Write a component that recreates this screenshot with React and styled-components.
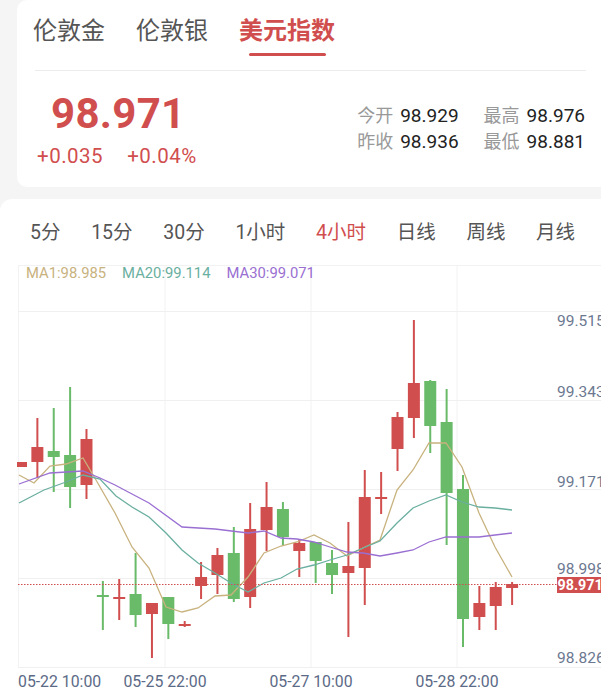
import React from 'react';
import styled, { createGlobalStyle } from 'styled-components';

const GlobalStyle = createGlobalStyle`
  html, body {
    margin: 0;
    padding: 0;
    background: #f5f5f5;
    font-family: Roboto, "Noto Sans CJK SC", sans-serif;
  }
  * { box-sizing: border-box; }
`;

const RED = '#d14e4e';
const GREEN = '#69ba69';

const Page = styled.div`
  width: 601px;
  height: 689px;
  overflow: hidden;
  display: flex;
  flex-direction: column;
  gap: 12px;
`;

const QuoteCard = styled.div`
  margin-left: 17px;
  height: 188px;
  background: #fff;
  border-radius: 10px 0 0 10px;
  display: flex;
  flex-direction: column;
`;

const Tabs = styled.div`
  height: 70px;
  display: flex;
  align-items: flex-start;
  gap: 31px;
  padding: 14px 0 0 16px;
`;

const Tab = styled.div`
  position: relative;
  font-size: 24px;
  line-height: 34px;
  color: ${({ active }) => (active ? RED : '#555')};
  font-weight: ${({ active }) => (active ? 700 : 400)};
  padding-bottom: 8px;

  &::after {
    content: '';
    display: ${({ active }) => (active ? 'block' : 'none')};
    position: absolute;
    left: 10px;
    right: 9px;
    bottom: 0;
    height: 3px;
    border-radius: 2px;
    background: ${RED};
  }
`;

const Divider = styled.div`
  height: 1px;
  background: #ececec;
  margin: 0 15px 0 18px;
`;

const QuoteRow = styled.div`
  display: flex;
  justify-content: space-between;
  padding: 18px 16px 0 20px;
`;

const PriceBlock = styled.div`
  display: flex;
  flex-direction: column;
`;

const Price = styled.div`
  font-size: 42px;
  font-weight: 700;
  color: ${RED};
  line-height: 50px;
  padding-left: 14px;
  letter-spacing: 0.3px;
`;

const Changes = styled.div`
  display: flex;
  gap: 24px;
  margin-top: 5px;
  font-size: 20.5px;
  line-height: 24px;
  letter-spacing: 0.5px;
  color: ${RED};
`;

const Stats = styled.div`
  display: grid;
  grid-template-columns: auto auto;
  column-gap: 25px;
  row-gap: 4px;
  margin-top: 16px;
  align-content: start;
`;

const Stat = styled.div`
  font-size: 19px;
  line-height: 22px;
  color: #222;
  white-space: nowrap;

  span {
    font-size: 18px;
    color: #999;
    margin-right: 7px;
  }
`;

const ChartCard = styled.div`
  flex: 1;
  background: #fff;
  border-radius: 12px 0 0 0;
  display: flex;
  flex-direction: column;
`;

const Periods = styled.div`
  height: 66px;
  display: flex;
  align-items: center;
  padding: 0 0 4px 30px;
  gap: 30.7px;
`;

const Period = styled.div`
  font-size: 19.5px;
  color: ${({ active }) => (active ? RED : '#555')};
`;

const ChartArea = styled.div`
  position: relative;
  flex: 1;
  border-top: 1px solid #f2f2f2;
  margin-left: 18px;
`;

const Legend = styled.div`
  position: absolute;
  top: -1px;
  left: 8px;
  display: flex;
  gap: 16px;
  font-size: 14.8px;
  line-height: 17px;
`;

const LegendItem = styled.span`
  color: ${({ color }) => color};
`;

const ChartSvg = styled.svg`
  display: block;
  margin-left: -18px;
`;

// [open, close, high, low] in pixel y
const candles = [
  [467, 462, 462, 467],
  [462, 447, 418, 478],
  [451, 457, 408, 492],
  [455, 487, 387, 508],
  [485, 439, 429, 499],
  [595, 596, 581, 630],
  [598, 597, 579, 620],
  [594, 615, 553, 627],
  [614, 603, 603, 658],
  [597, 624, 597, 639],
  [625, 624, 621, 627],
  [586, 577, 562, 599],
  [575, 555, 548, 594],
  [553, 599, 527, 602],
  [597, 529, 503, 608],
  [530, 507, 482, 551],
  [509, 537, 502, 545],
  [551, 543, 539, 577],
  [542, 561, 542, 583],
  [563, 575, 550, 594],
  [573, 566, 522, 637],
  [568, 497, 470, 605],
  [498, 497, 472, 514],
  [449, 417, 412, 471],
  [418, 383, 320, 438],
  [381, 426, 380, 453],
  [422, 493, 389, 545],
  [489, 619, 475, 647],
  [617, 603, 586, 630],
  [606, 587, 582, 630],
  [588, 584, 582, 605],
];

const ma1 = [
  [19, 475], [34, 483], [50, 466], [66, 464], [83, 458], [96, 480], [115, 513],
  [132, 547], [149, 568], [166, 607], [182, 612], [198, 608], [215, 596],
  [231, 595], [248, 577], [264, 553], [281, 546], [297, 542], [314, 535],
  [330, 543], [347, 556], [363, 548], [380, 540], [397, 490], [413, 470],
  [429, 443], [446, 443], [462, 467], [479, 513], [495, 547], [512, 577],
];

const ma20 = [
  [19, 503], [44, 490], [66, 482], [83, 475], [100, 479], [116, 496],
  [132, 507], [149, 517], [166, 533], [182, 550], [198, 563], [215, 573],
  [231, 583], [248, 592], [264, 583], [281, 578], [297, 569], [314, 565],
  [330, 560], [347, 555], [363, 548], [380, 541], [397, 523], [413, 508],
  [429, 501], [446, 495], [462, 502], [479, 507], [495, 508], [512, 510],
];

const ma30 = [
  [19, 484], [50, 473], [83, 471], [100, 478], [115, 485], [149, 503],
  [182, 527], [215, 529], [248, 533], [264, 531], [281, 538], [297, 539],
  [314, 542], [330, 547], [347, 552], [363, 553], [380, 556], [397, 553],
  [413, 550], [429, 542], [446, 537], [462, 537], [479, 537], [495, 535],
  [512, 533],
];

const axis = [
  ['99.515', 320],
  ['99.343', 391],
  ['99.171', 481],
  ['98.998', 568],
  ['98.826', 657],
];

const dates = [
  ['05-22 10:00', 18, 'start'],
  ['05-25 22:00', 165, 'middle'],
  ['05-27 10:00', 311, 'middle'],
  ['05-28 22:00', 457, 'middle'],
];

const pts = (list) => list.map(([x, y]) => `${x},${y}`).join(' ');

const Chart = () => (
  <ChartSvg width="601" height="423" viewBox="0 266 601 423">
    {[165, 311, 457].map((x) => (
      <line key={x} x1={x} y1={266} x2={x} y2={667} stroke="#f2f2f2" />
    ))}
    <line x1={18.5} y1={266} x2={18.5} y2={667} stroke="#f2f2f2" />
    {[311, 400, 489, 578, 667].map((y) => (
      <line key={y} x1={18} y1={y + 0.5} x2={601} y2={y + 0.5} stroke="#f0f0f0" />
    ))}

    {candles.map(([o, c, h, l], i) => {
      const x = 21 + i * 16.37;
      const up = c < o;
      const color = up ? RED : GREEN;
      const top = Math.min(o, c);
      const bh = Math.max(Math.abs(o - c), 2);
      return (
        <g key={i}>
          <line x1={x} y1={h} x2={x} y2={l} stroke={color} strokeWidth="2" />
          <rect
            x={i === 0 ? 17 : x - 6}
            y={top}
            width={i === 0 ? 10 : 12}
            height={bh}
            fill={color}
          />
        </g>
      );
    })}

    <polyline points={pts(ma1)} fill="none" stroke="#c8b27e" strokeWidth="1.3" />
    <polyline points={pts(ma20)} fill="none" stroke="#6aafa0" strokeWidth="1.3" />
    <polyline points={pts(ma30)} fill="none" stroke="#9a6fd2" strokeWidth="1.3" />

    <line
      x1={18}
      y1={584.5}
      x2={557}
      y2={584.5}
      stroke={RED}
      strokeWidth="1"
      strokeDasharray="1.5 1.5"
    />

    {axis.map(([t, y]) => (
      <text
        key={t}
        x={557}
        y={y + 5.5}
        fontSize="15.5"
        fill="#6b7890"
        fontFamily="Roboto, sans-serif"
      >
        {t}
      </text>
    ))}

    <rect x={557} y={577} width={46} height={16} fill={RED} />
    <text x={557.5} y={590} fontSize="14.3" fontWeight="700" fill="#fff" fontFamily="Roboto, sans-serif">
      98.971
    </text>

    {dates.map(([t, x, anchor]) => (
      <text
        key={t}
        x={x}
        y={687}
        fontSize="15.8"
        fill="#5b6a86"
        textAnchor={anchor}
        fontFamily="Roboto, sans-serif"
      >
        {t}
      </text>
    ))}
  </ChartSvg>
);

const periods = ['5分', '15分', '30分', '1小时', '4小时', '日线', '周线', '月线'];

const App = () => (
  <>
    <GlobalStyle />
    <Page>
      <QuoteCard>
        <Tabs>
          <Tab>伦敦金</Tab>
          <Tab>伦敦银</Tab>
          <Tab active>美元指数</Tab>
        </Tabs>
        <Divider />
        <QuoteRow>
          <PriceBlock>
            <Price>98.971</Price>
            <Changes>
              <span>+0.035</span>
              <span>+0.04%</span>
            </Changes>
          </PriceBlock>
          <Stats>
            <Stat><span>今开</span>98.929</Stat>
            <Stat><span>最高</span>98.976</Stat>
            <Stat><span>昨收</span>98.936</Stat>
            <Stat><span>最低</span>98.881</Stat>
          </Stats>
        </QuoteRow>
      </QuoteCard>
      <ChartCard>
        <Periods>
          {periods.map((p) => (
            <Period key={p} active={p === '4小时'}>{p}</Period>
          ))}
        </Periods>
        <ChartArea>
          <Legend>
            <LegendItem color="#c8b27e">MA1:98.985</LegendItem>
            <LegendItem color="#6aafa0">MA20:99.114</LegendItem>
            <LegendItem color="#9a6fd2">MA30:99.071</LegendItem>
          </Legend>
          <Chart />
        </ChartArea>
      </ChartCard>
    </Page>
  </>
);

export default App;
